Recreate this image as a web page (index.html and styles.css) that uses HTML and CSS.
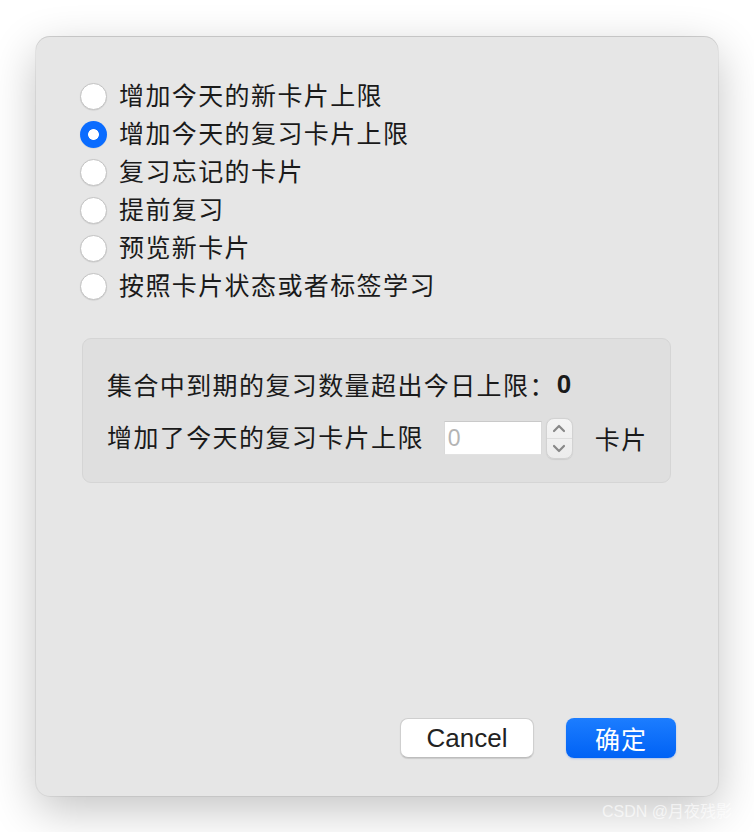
FILE: index.html
```html
<!DOCTYPE html>
<html lang="zh">
<head>
<meta charset="utf-8">
<title>Custom Study</title>
<link rel="stylesheet" href="styles.css">
</head>
<body>
<div class="window">
  <div class="options">
    <div class="option"><span class="radio"></span><span class="label">增加今天的新卡片上限</span></div>
    <div class="option"><span class="radio checked"></span><span class="label">增加今天的复习卡片上限</span></div>
    <div class="option"><span class="radio"></span><span class="label">复习忘记的卡片</span></div>
    <div class="option"><span class="radio"></span><span class="label">提前复习</span></div>
    <div class="option"><span class="radio"></span><span class="label">预览新卡片</span></div>
    <div class="option"><span class="radio"></span><span class="label">按照卡片状态或者标签学习</span></div>
  </div>
  <div class="panel">
    <div class="info-row">集合中到期的复习数量超出今日上限：<b class="count">0</b></div>
    <div class="input-row">
      <span class="label">增加了今天的复习卡片上限</span>
      <span class="field">0</span>
      <span class="stepper">
        <span class="step">
          <svg width="14" height="9" viewBox="0 0 14 9"><polyline points="2,7 7,2 12,7" fill="none" stroke="#888888" stroke-width="2.2" stroke-linecap="round" stroke-linejoin="round"/></svg>
        </span>
        <span class="step step-down">
          <svg width="14" height="9" viewBox="0 0 14 9"><polyline points="2,2 7,7 12,2" fill="none" stroke="#888888" stroke-width="2.2" stroke-linecap="round" stroke-linejoin="round"/></svg>
        </span>
      </span>
      <span class="unit">卡片</span>
    </div>
  </div>
  <div class="buttons">
    <span class="btn btn-cancel">Cancel</span>
    <span class="btn btn-ok">确定</span>
  </div>
</div>
<div class="watermark">CSDN @月夜残影</div>
</body>
</html>
```
FILE: styles.css
```css
html, body {
  margin: 0;
  padding: 0;
  background: #ffffff;
}
body {
  width: 754px;
  height: 832px;
  overflow: hidden;
  position: relative;
  font-family: "Liberation Sans", "Noto Sans CJK SC", sans-serif;
  color: #1a1a1a;
}
.window {
  margin: 37px 0 0 36px;
  width: 682px;
  height: 759px;
  box-sizing: border-box;
  background: #e6e6e6;
  border-radius: 14px;
  box-shadow: 0 0 0 1px rgba(0,0,0,0.06), 0 -1px 0 rgba(0,0,0,0.12), 0 14px 46px rgba(0,0,0,0.24);
  display: flex;
  flex-direction: column;
  padding: 40px 42px 38px 44px;
}
.options {
  display: flex;
  flex-direction: column;
}
.option {
  height: 38px;
  display: flex;
  align-items: center;
  gap: 12px;
}
.label {
  font-size: 25px;
  letter-spacing: 1.4px;
  line-height: 30px;
  white-space: nowrap;
  flex: none;
}
.radio {
  width: 27px;
  height: 27px;
  box-sizing: border-box;
  border-radius: 50%;
  background: #ffffff;
  border: 1px solid #c3c3c3;
  box-shadow: 0 0.5px 1px rgba(0,0,0,0.12);
  flex: none;
}
.radio.checked {
  border: none;
  background: radial-gradient(circle at center, #ffffff 0, #ffffff 5px, #0a6cff 5.8px);
}
.panel {
  margin: 33px 0 0 2px;
  width: 589px;
  box-sizing: border-box;
  background: #dfdfdf;
  border: 1px solid #d5d5d5;
  border-radius: 9px;
  padding: 27px 16px 23px 24px;
  display: flex;
  flex-direction: column;
  gap: 15px;
}
.info-row {
  height: 36px;
  display: flex;
  align-items: center;
  font-size: 25px;
  letter-spacing: 1.4px;
  white-space: nowrap;
}
.count {
  font-weight: bold;
  letter-spacing: 0;
  font-size: 26px;
  margin-left: 1px;
}
.input-row {
  height: 42px;
  display: flex;
  align-items: center;
}
.field {
  flex: none;
  margin-left: 20px;
  width: 98px;
  height: 34px;
  box-sizing: border-box;
  background: #ffffff;
  border-top: 1px solid #c9c9c9;
  border-left: 1px solid #dadada;
  border-right: 1px solid #dadada;
  border-bottom: 1px solid #e2e2e2;
  color: #b4b4b4;
  font-size: 23px;
  line-height: 32px;
  padding-left: 3px;
}
.stepper {
  flex: none;
  margin-left: 4px;
  width: 27px;
  height: 41px;
  box-sizing: border-box;
  border: 1px solid #d2d2d2;
  border-radius: 8px;
  background: linear-gradient(#f4f4f4, #ececec);
  box-shadow: 0 0.5px 1px rgba(0,0,0,0.08);
  display: flex;
  flex-direction: column;
  overflow: hidden;
}
.step {
  flex: 1;
  display: flex;
  align-items: center;
  justify-content: center;
}
.step-down {
  border-top: 1px solid #dedede;
}
.unit {
  flex: none;
  white-space: nowrap;
  margin-left: 22px;
  font-size: 25px;
  letter-spacing: 1.4px;
}
.buttons {
  margin-top: auto;
  display: flex;
  justify-content: flex-end;
  gap: 32px;
}
.btn {
  height: 40px;
  box-sizing: border-box;
  border-radius: 8px;
  display: flex;
  align-items: center;
  justify-content: center;
}
.btn-cancel {
  width: 134px;
  background: #ffffff;
  border: 1px solid #cfcfcf;
  border-bottom-color: #bdbdbd;
  box-shadow: 0 1px 1px rgba(0,0,0,0.12);
  font-size: 26px;
  color: #222;
}
.btn-ok {
  width: 110px;
  background: linear-gradient(#1c7dff, #0062f5);
  color: #ffffff;
  font-size: 25px;
  letter-spacing: 1px;
  box-shadow: 0 1px 2px rgba(0,90,255,0.25);
}
.watermark {
  position: absolute;
  left: 602px;
  top: 800px;
  font-size: 16px;
  line-height: 24px;
  color: rgba(255,255,255,0.65);
  white-space: nowrap;
}
```
